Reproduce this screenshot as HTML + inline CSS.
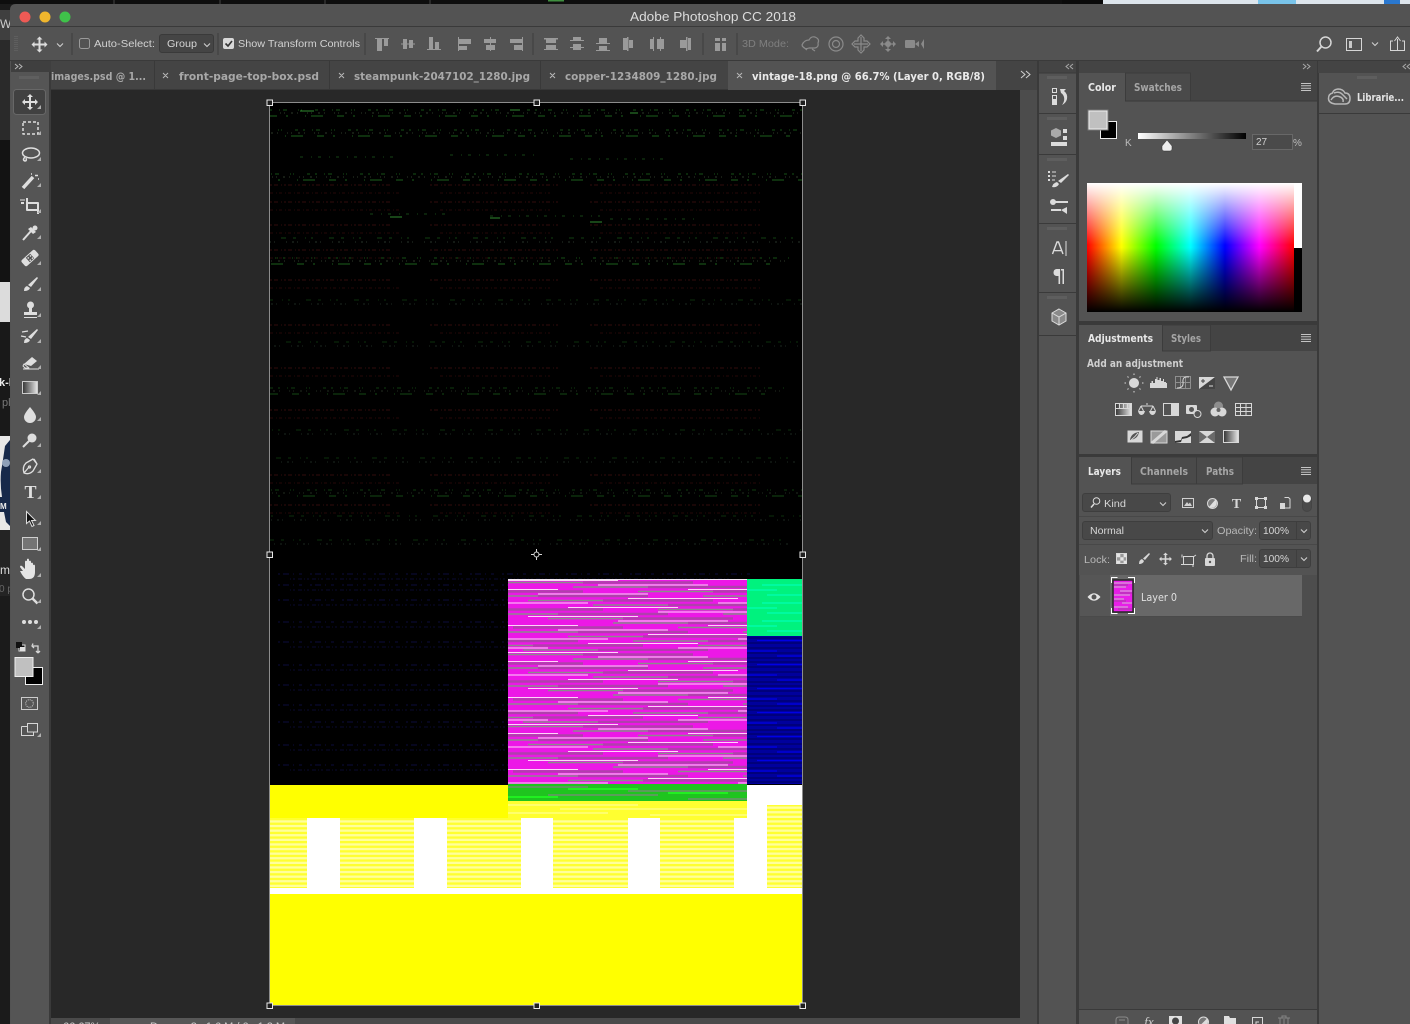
<!DOCTYPE html>
<html><head><meta charset="utf-8"><title>Adobe Photoshop CC 2018</title>
<style>
html,body{margin:0;padding:0;width:1410px;height:1024px;overflow:hidden;background:#1a1a1a}
svg{display:block}
text{font-family:"DejaVu Sans","Liberation Sans",sans-serif}
.h{font-family:"Liberation Sans",sans-serif}
</style></head><body>
<svg xmlns="http://www.w3.org/2000/svg" width="1410" height="1024" viewBox="0 0 1410 1024">
<defs>
<clipPath id="cv"><rect x="270" y="103" width="532" height="682"/></clipPath>
<linearGradient id="hue" x1="0" x2="1" y1="0" y2="0">
<stop offset="0" stop-color="#f00"/><stop offset=".1667" stop-color="#ff0"/><stop offset=".3333" stop-color="#0f0"/><stop offset=".5" stop-color="#0ff"/><stop offset=".6667" stop-color="#00f"/><stop offset=".8333" stop-color="#f0f"/><stop offset="1" stop-color="#f00"/>
</linearGradient>
<linearGradient id="wb" x1="0" x2="0" y1="0" y2="1">
<stop offset="0" stop-color="#fff"/><stop offset=".48" stop-color="#fff" stop-opacity="0"/><stop offset=".5" stop-color="#000" stop-opacity="0"/><stop offset="1" stop-color="#000"/>
</linearGradient>
<linearGradient id="k" x1="0" x2="1" y1="0" y2="0"><stop offset="0" stop-color="#fff"/><stop offset="1" stop-color="#000"/></linearGradient>
<linearGradient id="kr" x1="0" x2="1" y1="0" y2="0"><stop offset="0" stop-color="#333"/><stop offset="1" stop-color="#e8e8e8"/></linearGradient>
<pattern id="mag" patternUnits="userSpaceOnUse" x="508" y="579" width="240" height="72">
<rect width="240" height="72" fill="#ec18e6"/>
<path d="M75 3.500h110M140 8h100M205 12.500h35M0 12.500h75M30 17h110M95 21.500h110M160 26h80M225 30.500h15M0 30.500h95M50 35h110M115 39.500h110M180 44h60M5 48.500h110M70 53h110M135 57.500h105M200 62h40M0 62h70M25 66.500h110M90 71h110" stroke="#b040ac" stroke-width="2.400" fill="none"/>
<path d="M0 1.500h110M90 6h110M180 10.500h60M0 10.500h50M30 15h110M120 19.500h110M210 24h30M0 24h80M60 28.500h110M150 33h90M20 37.500h110M110 42h110M200 46.500h40M0 46.500h70M50 51h110M140 55.500h100M230 60h10M0 60h100M80 64.500h110M170 69h70M0 69h40" stroke="#ffd4fa" stroke-width="1" fill="none"/>
<path d="M0 3.500h75M65 8h75M130 12.500h75M195 17h45M0 17h30M20 21.500h75M85 26h75M150 30.500h75M215 35h25M0 35h50M40 39.500h75M105 44h75M170 48.500h70M235 53h5M0 53h70M60 57.500h75M125 62h75M190 66.500h50M0 66.500h25M15 71h75" stroke="#8b8b8b" stroke-width="1.500" fill="none"/>
</pattern>
<pattern id="grn" patternUnits="userSpaceOnUse" x="508" y="785" width="240" height="16">
<rect width="240" height="16" fill="#1fc41f"/>
<path d="M0 2h80M120 6h120M40 10h110M180 14h60" stroke="#6f8f6f" stroke-width="1.600"/>
<path d="M60 4h70M160 8h60M0 12h50" stroke="#20ff20" stroke-width="1.400"/>
</pattern>
<pattern id="ylw" patternUnits="userSpaceOnUse" x="0" y="818" width="10" height="4.600">
<rect width="10" height="4.600" fill="#ffff9c"/><rect width="10" height="2.300" fill="#ffff30"/>
</pattern>
<pattern id="aqua" patternUnits="userSpaceOnUse" x="747" y="579" width="55" height="18">
<rect width="55" height="18" fill="#00f27e"/><path d="M15 6h40M0 11h30M20 16h35" stroke="#00ffb4" stroke-width="1.200"/>
</pattern>
<pattern id="blu" patternUnits="userSpaceOnUse" x="747" y="636" width="55" height="24">
<rect width="55" height="24" fill="#00009c"/>
<path d="M0 2h55M0 7h55M0 12h55M0 17h55M0 22h55" stroke="#000068" stroke-width="1.300"/>
<path d="M10 4.500h45M0 15h30M30 20h25" stroke="#0000e6" stroke-width="1.300"/>
</pattern>
<g id="bg">
<path d="M0 0h560" stroke="#165016" stroke-width="1" stroke-dasharray="2 7 1 3 4 11 1 2 1 13 3 5"/>
<path d="M10 3h550" stroke="#2e3a2a" stroke-width="1" stroke-dasharray="1 3 1 6 2 4 1 9"/>
<path d="M0 6h540" stroke="#134013" stroke-width="1.500" stroke-dasharray="7 9 2 17 1 5 12 14"/>
</g>
<g id="bg2">
<path d="M5 0h550" stroke="#123f12" stroke-width="1" stroke-dasharray="3 9 1 5 2 16 5 7"/>
<path d="M0 4h560" stroke="#27352a" stroke-width="1" stroke-dasharray="1 5 2 3 1 11"/>
</g>
<g id="rd">
<path d="M0 0h120M160 0h130M320 0h170" stroke="#3f1010" stroke-width="1" stroke-dasharray="2 2 4 3 1 2"/>
<path d="M0 8h130M170 8h110M330 8h160" stroke="#300c0c" stroke-width="1" stroke-dasharray="3 3 1 2"/>
</g>
<g id="bl">
<path d="M8 0h480" stroke="#0c0c3c" stroke-width="1" stroke-dasharray="2 3 6 4 1 5 3 8"/>
<path d="M20 5h440" stroke="#0a0a30" stroke-width="1" stroke-dasharray="1 2 2 3 4 2"/>
</g>
<path id="menu" d="M-5-3.500h10M-5-1.200h10M-5 1.200h10M-5 3.500h10" stroke="#c4c4c4" stroke-width="1" fill="none"/>
<path id="tri" d="M0 0l-4 4h4z" fill="#b0b0b0"/>
<path id="grip" d="M0 1v3M2 1v3M4 1v3M6 1v3M8 1v3M10 1v3M12 1v3M14 1v3M16 1v3M18 1v3" stroke="#696969" stroke-width="1"/>
<path id="chev" d="M-3-1.500l3 3 3-3" stroke="#cfcfcf" stroke-width="1.100" fill="none"/>
</defs>

<!-- desktop behind -->
<rect width="1410" height="1024" fill="#1b1b1b"/>
<rect width="1103" height="4" fill="#0e0e0e"/>
<rect x="1103" width="307" height="4" fill="#dde5ec"/>
<rect x="1258" width="38" height="4" fill="#79c4ea"/>
<rect x="1384" width="16" height="4" fill="#2a78d0"/>
<rect x="1062" width="41" height="4" fill="#0a0a0a"/>
<path d="M114 0v4M220 0v4M325 0v4M430 0v4" stroke="#444"/>
<rect x="548" width="16" height="1.500" fill="#3f8f3f"/>
<rect x="0" y="10" width="10" height="30" fill="#3f3f3f"/>
<rect x="0" y="40" width="10" height="100" fill="#2a2a2a"/>
<rect x="0" y="140" width="10" height="142" fill="#131313"/>
<rect x="0" y="282" width="10" height="40" fill="#dcdcdc"/>
<rect x="0" y="322" width="10" height="113" fill="#191919"/>
<rect x="0" y="436" width="10" height="94" fill="#e8e8e8"/>
<path d="M10 440L5 446Q3 460 1 472Q0 484 2 497H0V512H4L6 522 10 526z" fill="#17294a"/>
<circle cx="6" cy="463" r="4" fill="#8fa0b8"/>
<rect x="0" y="530" width="10" height="66" fill="#242424"/>
<text x="0" y="28" font-size="12" fill="#ccc" class="h">W</text>
<text x="-1" y="386" font-size="11" fill="#eee" font-weight="bold" class="h">k-l</text>
<text x="2" y="406" font-size="11" fill="#777" class="h">pl</text>
<text x="0" y="574" font-size="12" fill="#ddd" class="h">m</text>
<text x="-1" y="592" font-size="10" fill="#666" class="h">0 p</text>
<text x="0" y="509" font-size="8" fill="#eee" font-weight="bold" class="h">M</text>

<!-- window -->
<path d="M10 1024V10q0-6 6-6H1410v1020z" fill="#535353"/>
<rect x="10" y="26" width="1400" height="1" fill="#3a3a3a"/>
<rect x="10" y="60" width="1400" height="1" fill="#3a3a3a"/>
<circle cx="25" cy="17" r="5.500" fill="#ee5a55"/><circle cx="45" cy="17" r="5.500" fill="#f0b62d"/><circle cx="65" cy="17" r="5.500" fill="#3fc24a"/>
<text x="630" y="21" font-size="13" fill="#dcdcdc" textLength="166" lengthAdjust="spacingAndGlyphs" class="h">Adobe Photoshop CC 2018</text>

<!-- options bar -->
<path d="M15 36v16M17 36v16" stroke="#6a6a6a" stroke-dasharray="1 1"/>
<path d="M72 33v22M218 33v22M365 33v22M533 33v22M703 33v22M737 33v22" stroke="#3c3c3c"/>
<g transform="translate(39.500 44.500)" fill="#dcdcdc"><path d="M0-8L-3-5h2v4h-4v-2l-3 3 3 3V1h4v4h-2l3 3 3-3H1V1h4v2l3-3-3-3v2H1v-4h2z"/></g>
<use href="#chev" x="60" y="45"/>
<rect x="79.500" y="38.500" width="10" height="10" rx="2" fill="none" stroke="#9a9a9a"/>
<text x="94" y="47" font-size="10.500" fill="#d2d2d2" textLength="61" lengthAdjust="spacingAndGlyphs" class="h">Auto-Select:</text>
<rect x="159.500" y="34.500" width="54" height="18" rx="2.500" fill="#454545" stroke="#3a3a3a"/>
<text x="167" y="47" font-size="10.500" fill="#d6d6d6" textLength="30" lengthAdjust="spacingAndGlyphs" class="h">Group</text>
<use href="#chev" x="207" y="45"/>
<rect x="223" y="38" width="11" height="11" rx="2" fill="#d8d8d8"/>
<path d="M225.500 43.500l2.500 2.500 4-5" stroke="#333" stroke-width="1.600" fill="none"/>
<text x="238" y="47" font-size="10.500" fill="#d2d2d2" textLength="122" lengthAdjust="spacingAndGlyphs" class="h">Show Transform Controls</text>
<g fill="#9a9a9a">
<path d="M375 38h14v1h-14zM377 39h5v12h-5zM384 39h4v7h-4z"/>
<path d="M401 43.500h14v1h-14zM403 39h4v10h-4zM409 40h4v8h-4z"/>
<path d="M427 49h14v1h-14zM429 37h4v12h-4zM435 42h4v7h-4z"/>
<path d="M458 37h1v14h-1zM459 39h12v5h-12zM459 46h8v4h-8z"/>
<path d="M490 37h1v14h-1zM484 39h12v4h-12zM486 45h9v5h-9z"/>
<path d="M522 37h1v14h-1zM510 39h12v4h-12zM514 45h8v5h-8z"/>
<path d="M544 38h14v1.500h-14zM546 39h10v4h-10zM544 49h14v1h-14zM546 45h10v4h-10z"/>
<path d="M570 40h14v1h-14zM573 37h8v3h-8zM570 47h14v1h-14zM573 44h8v6h-8z"/>
<path d="M596 43h14v1h-14zM599 38h8v5h-8zM596 50h14v1h-14zM599 46h8v4h-8z"/>
<path d="M627 37h1.500v14H627zM629 40h4v8h-4zM623 38h4v12h-4z"/>
<path d="M653 37h1v14h-1zM650 39h3v10h-3zM660 37h1v14h-1zM657 39h7v10h-7z"/>
<path d="M686 37h1.500v14H686zM680 40h6v8h-6zM688 38h3v12h-3z"/>
<path d="M715 38h5v3h-5zM715 43h5v8h-5zM722 38h4v3h-4zM722 43h4v8h-4z"/>
</g>
<text x="742" y="47" font-size="10.500" fill="#7f7f7f" textLength="47" lengthAdjust="spacingAndGlyphs" class="h">3D Mode:</text>
<g fill="none" stroke="#8a8a8a" stroke-width="1.200">
<path d="M802 45q2-5 7-5 2-4 6-3 5 2 3 6 1 4-3 5h-6q-5 2-7-3zM807 50l-5-4M812 49l3 2"/>
<circle cx="836" cy="44" r="7"/><circle cx="836" cy="44" r="3.500"/>
<path d="M861 37v14M854 44h14M858 38l3-3 3 3v3h3l3 3-3 3h-3v3l-3 3-3-3v-3h-3l-3-3 3-3h3z"/>
<path d="M888 38v12M882 44h12"/>
</g>
<g fill="#8a8a8a"><path d="M888 36l3 3h-6zM888 52l3-3h-6zM880 44l3-3v6zM896 44l-3-3v6z"/><circle cx="888" cy="44" r="3"/>
<rect x="905" y="40" width="10" height="8" rx="1"/><path d="M915 44l4-3v6zM924 39l-3 5 3 5" /></g>
<g fill="none" stroke="#d6d6d6" stroke-width="1.500">
<circle cx="1325.500" cy="42.500" r="5.500"/><path d="M1321.500 46.500l-4.500 5" stroke-width="2"/>
<rect x="1346.500" y="38.500" width="15" height="12" stroke-width="1"/>
<path d="M1397.500 39v11M1394.500 41l3-4 3 4" stroke-width="1"/>
<path d="M1393 41h-2.500v9.500h14V41H1402" stroke-width="1"/>
</g>
<path d="M1349 41h3v7h-3z" fill="#c8c8c8"/>
<use href="#chev" x="1375" y="44"/>

<!-- document column -->
<rect x="51" y="90" width="969" height="934" fill="#282828"/>
<rect x="51" y="61" width="986" height="29" fill="#444"/>
<rect x="1020" y="90" width="17" height="934" fill="#4c4c4c"/>
<rect x="1037" y="61" width="2" height="963" fill="#3a3a3a"/>
<path d="M154.500 61v29M329.500 61v29M540.500 61v29" stroke="#393939"/>
<rect x="728" y="61" width="268" height="29" fill="#535353"/>
<rect x="51" y="89" width="677" height="1" fill="#383838"/>
<g font-size="11" font-weight="bold" fill="#a8a8a8">
<text x="51" y="80" textLength="95" lengthAdjust="spacingAndGlyphs">images.psd @ 1...</text>
<text x="179" y="80" textLength="140" lengthAdjust="spacingAndGlyphs">front-page-top-box.psd</text>
<text x="354" y="80" textLength="176" lengthAdjust="spacingAndGlyphs">steampunk-2047102_1280.jpg</text>
<text x="565" y="80" textLength="152" lengthAdjust="spacingAndGlyphs">copper-1234809_1280.jpg</text>
<text x="752" y="80" textLength="233" lengthAdjust="spacingAndGlyphs" fill="#eaeaea">vintage-18.png @ 66.7% (Layer 0, RGB/8)</text>
</g>
<path d="M163 73l5 5M168 73l-5 5M339 73l5 5M344 73l-5 5M550 73l5 5M555 73l-5 5M737 73l5 5M742 73l-5 5" stroke="#b8b8b8" stroke-width="1" fill="none"/>
<path d="M1021 71l4 3.500-4 3.500M1026 71l4 3.500-4 3.500" stroke="#d0d0d0" fill="none"/>

<!-- canvas image -->
<rect x="270" y="103" width="532" height="902" fill="#000"/>
<g clip-path="url(#cv)">
<use href="#bg" x="270" y="110"/><use href="#bg" x="250" y="130"/><use href="#bg" x="262" y="174"/>
<use href="#bg2" x="240" y="238"/><use href="#bg" x="230" y="258"/>
<g opacity=".75">
<use href="#bg2" x="265" y="300"/><use href="#bg2" x="245" y="342"/><use href="#bg" x="225" y="388"/><use href="#bg2" x="255" y="430"/><use href="#bg2" x="235" y="458"/><use href="#bg" x="262" y="490"/><use href="#bg2" x="248" y="516"/><use href="#bg2" x="228" y="540"/>
</g>
<g transform="translate(270 0)" opacity=".8">
<use href="#rd" y="185"/><use href="#rd" y="202"/><use href="#rd" y="225"/><use href="#rd" y="250"/><use href="#rd" y="280"/><use href="#rd" y="325"/><use href="#rd" y="368"/><use href="#rd" y="410"/><use href="#rd" y="475"/><use href="#rd" y="505"/>
</g>
<g transform="translate(270 0)">
<path d="M30 157h100M180 155h90M300 159h100M100 214h80M220 216h110M340 219h90" stroke="#164416" stroke-dasharray="3 8 1 6"/>
<path d="M30 111h14M240 110h10M360 113h8M120 217h12M220 218h10M320 222h12" stroke="#2f8a2f"/>
<use href="#bl" y="574"/><use href="#bl" y="585"/><use href="#bl" y="600"/><use href="#bl" y="622"/><use href="#bl" y="642"/><use href="#bl" y="665"/><use href="#bl" y="685"/><use href="#bl" y="705"/><use href="#bl" y="722"/><use href="#bl" y="745"/><use href="#bl" y="765"/>
</g>
</g>
<rect x="508" y="579" width="239" height="205" fill="url(#mag)"/>
<rect x="508" y="579" width="239" height="1" fill="#f0e8f0"/>
<rect x="747" y="579" width="55" height="57" fill="url(#aqua)"/>
<rect x="747" y="636" width="55" height="148" fill="url(#blu)"/>
<rect x="270" y="785" width="238" height="33" fill="#ff0"/>
<rect x="508" y="784" width="239" height="17" fill="url(#grn)"/>
<rect x="508" y="801" width="239" height="17" fill="#ffff30"/>
<path d="M508 805h130M560 809h187M508 813h100M650 815h97" stroke="#ffff90" stroke-width="1.200"/>
<rect x="747" y="785" width="55" height="20" fill="#fff"/>
<rect x="270" y="818" width="532" height="76" fill="#fff"/>
<rect x="747" y="805" width="55" height="13" fill="#fff"/>
<g fill="url(#ylw)">
<rect x="270" y="818" width="37" height="70"/><rect x="340" y="818" width="74" height="70"/><rect x="447" y="818" width="74" height="70"/><rect x="553" y="818" width="75" height="70"/><rect x="660" y="818" width="74" height="70"/><rect x="767" y="805" width="35" height="83"/>
</g>
<rect x="270" y="894" width="532" height="111" fill="#ff0"/>
<!-- transform controls -->
<rect x="269.500" y="102.500" width="533" height="903" fill="none" stroke="#8c8c8c"/>
<g fill="#1f1f1f" stroke="#e8e8e8">
<rect x="267" y="100" width="5.500" height="5.500"/><rect x="534" y="100" width="5.500" height="5.500"/><rect x="800" y="100" width="5.500" height="5.500"/>
<rect x="267" y="552" width="5.500" height="5.500"/><rect x="800" y="552" width="5.500" height="5.500"/>
<rect x="267" y="1003" width="5.500" height="5.500"/><rect x="534" y="1003" width="5.500" height="5.500"/><rect x="800" y="1003" width="5.500" height="5.500"/>
</g>
<g stroke="#d8d8d8" fill="none"><circle cx="536.500" cy="554.500" r="2.500"/><path d="M536.500 549v3M536.500 557v3M531 554.500h3M539 554.500h3"/></g>

<!-- status bar -->
<rect x="51" y="1018" width="969" height="6" fill="#4a4a4a"/>
<rect x="110" y="1018" width="185" height="6" fill="#575757"/>
<text x="63" y="1030" font-size="11" fill="#cfcfcf" class="h">66.67%</text>
<text x="150" y="1030" font-size="11" fill="#cfcfcf" class="h" textLength="135" lengthAdjust="spacing">Doc: 3.16M/6.12M</text>

<!-- toolbar -->
<rect x="11" y="61" width="38" height="963" fill="#555"/>
<rect x="49" y="61" width="2" height="963" fill="#3a3a3a"/>
<rect x="11" y="61" width="40" height="11" fill="#3f3f3f"/>
<path d="M15 64l3 2.500-3 2.500M19 64l3 2.500-3 2.500" stroke="#b8b8b8" fill="none"/>
<use href="#grip" x="20" y="75"/>
<rect x="13.500" y="89.500" width="32" height="25" rx="3" fill="#414141" stroke="#676767"/>
<g fill="#dedede" stroke="#dedede" stroke-width="1.500" stroke-linejoin="round">
<g transform="translate(30 102)" stroke="none"><path d="M0-8L-3-5h2v4h-4v-2l-3 3 3 3V1h4v4h-2l3 3 3-3H1V1h4v2l3-3-3-3v2H1v-4h2z"/></g>
<rect x="23" y="122" width="15" height="12" fill="none" stroke-dasharray="3 2"/>
<g fill="none"><ellipse cx="31" cy="153" rx="8.500" ry="5"/><path d="M25 157q-3 3 0 4 2 0 1-3"/></g>
<path d="M23 188l10-11" stroke-width="3.500" fill="none"/>
<path d="M35 175.500l3 0M38 172v0M31 174l1 0M38 179l1 0" stroke-width="1.500"/>
<path d="M27 198V210H38M21 203h3M27 203H38V214" fill="none" stroke-width="2"/><path d="M20 200h5" stroke-width="1" fill="none"/>
<path d="M23 240l8-9" stroke-width="2" fill="none"/><path d="M31 227l5 5-3 2-5-5z" stroke="none"/><circle cx="35" cy="228" r="2.500" stroke="none"/>
<g transform="rotate(-42 30 258)"><rect x="21" y="254" width="18" height="8" rx="2" stroke="none"/><path d="M27 255h6v6h-6z" fill="#555" stroke="none"/><path d="M28 256h1.500v1.500H28zM31 256h1.500v1.500H31zM28 259h1.500v1.500H28zM31 259h1.500v1.500H31z" fill="#ddd" stroke="none"/></g>
<path d="M37 277l1 1-7 9-3-2z" stroke="none"/><path d="M27 286q-3 1-3 5 5 0 6-3z" stroke="none"/>
<circle cx="30.500" cy="305" r="3.500" stroke="none"/><path d="M29 308h3v4h5v3H24v-3h5z" stroke="none"/><rect x="24" y="317" width="13" height="1" stroke="none"/>
<path d="M37 329l1 1-7 9-3-2z" stroke="none"/><path d="M27 338q-3 1-3 5 5 0 6-3z" stroke="none"/><path d="M22 332l6-1M21 336l5 1" fill="none" stroke-width="1.200"/>
<path d="M24 364l8-7 5 4-6 5z" stroke="none"/><path d="M24 364l5 4h-4l-2-2zM23 369h16" fill="none" stroke-width="1"/>
<rect x="22.500" y="381.500" width="15" height="12" fill="url(#kr)" stroke-width="1" stroke="#ccc"/>
<path d="M30 407q6 7 6 10a6 6 0 0 1-12 0q0-3 6-10z" stroke="none"/>
<circle cx="32" cy="438" r="4.500" stroke="none"/><path d="M29 441l-6 6" stroke-width="2" fill="none"/>
<g fill="none" stroke-width="1.300"><path d="M24 473q-2-6 2-10l7-4 4 5-4 7q-4 4-9 2zM24 473l5-6M34 459l3 5"/><circle cx="29.500" cy="467" r="1"/></g>
</g>
<text x="30.500" y="498" text-anchor="middle" font-size="18" font-weight="bold" fill="#e0e0e0" style="font-family:'Liberation Serif',serif">T</text>
<path d="M26.500 511.500v12l3-2.500 2.500 5.500 2-1-2.500-5h4z" fill="#111" stroke="#ddd"/>
<rect x="22.500" y="537.500" width="15" height="12" fill="#747474" stroke="#cfcfcf"/>
<path d="M23 571l-3-4q0-2 2-1l3 3v-7q0-2 2-1l0-2q2-1 2 1v1q2-1 2 1v1q2-1 2 1v1q2-1 2 1v6q0 7-6 7h-3q-3-2-6-8z" fill="#e4e4e4"/>
<g fill="none" stroke="#dedede"><circle cx="28.500" cy="594.500" r="5.500" stroke-width="1.500"/><path d="M32.500 598.500l5 5" stroke-width="2.500"/></g>
<g fill="#dedede"><circle cx="24" cy="622" r="2"/><circle cx="30" cy="622" r="2"/><circle cx="36" cy="622" r="2"/></g>
<g fill="#b0b0b0"><use href="#tri" x="41" y="105"/><use href="#tri" x="41" y="131"/><use href="#tri" x="41" y="157"/><use href="#tri" x="41" y="183"/><use href="#tri" x="41" y="209"/><use href="#tri" x="41" y="235"/><use href="#tri" x="41" y="261"/><use href="#tri" x="41" y="287"/><use href="#tri" x="41" y="313"/><use href="#tri" x="41" y="339"/><use href="#tri" x="41" y="365"/><use href="#tri" x="41" y="391"/><use href="#tri" x="41" y="417"/><use href="#tri" x="41" y="443"/><use href="#tri" x="41" y="469"/><use href="#tri" x="41" y="495"/><use href="#tri" x="41" y="521"/><use href="#tri" x="41" y="547"/><use href="#tri" x="41" y="573"/><use href="#tri" x="41" y="599"/><use href="#tri" x="41" y="625"/><use href="#tri" x="41" y="733"/></g>
<rect x="19" y="645" width="6" height="6" fill="#111" stroke="#ddd"/><rect x="16" y="642" width="6" height="6" fill="#111"/><rect x="20" y="647" width="5" height="4" fill="#e0e0e0"/>
<path d="M33 646h5v6M33 643.500l-1 2.500 2 2M38 653l-2-2M38 653l2-2" stroke="#d6d6d6" stroke-width="1.300" fill="none"/>
<rect x="25.500" y="667.500" width="17" height="17" fill="#000" stroke="#eee"/>
<rect x="15" y="657.500" width="18" height="19" fill="#c0c0c0" stroke="#eee"/>
<rect x="21.500" y="697.500" width="16" height="12" fill="none" stroke="#ccc"/><circle cx="29.500" cy="703.500" r="3.800" fill="none" stroke="#ccc" stroke-dasharray="1 1"/>
<path d="M21.500 726.500h6M21.500 726.500v9h12v-3M27.500 723.500h10v8.500h-10z" fill="none" stroke="#d6d6d6"/>

<!-- top strip right panels -->
<rect x="1039" y="61" width="371" height="12" fill="#444"/>
<path d="M1069 64l-3 2.500 3 2.500M1073 64l-3 2.500 3 2.500M1303 64l3 2.500-3 2.500M1307 64l3 2.500-3 2.500M1406 64l-3 2.500 3 2.500M1410 64l-3 2.500 3 2.500" stroke="#a8a8a8" fill="none"/>
<!-- dock -->
<rect x="1039" y="73" width="37" height="951" fill="#535353"/>
<path d="M1039 73h37M1039 113.500h37M1039 154.500h37M1039 223.500h37M1039 292.500h37M1039 335.500h37M1076.500 61v963" stroke="#3a3a3a"/>
<rect x="1077" y="61" width="2" height="963" fill="#3a3a3a"/>
<use href="#grip" x="1048" y="75"/><use href="#grip" x="1048" y="116"/><use href="#grip" x="1048" y="157"/><use href="#grip" x="1048" y="226"/><use href="#grip" x="1048" y="295"/>
<g fill="#dcdcdc">
<rect x="1052.500" y="88.500" width="4" height="4" fill="none" stroke="#dcdcdc"/><rect x="1052.500" y="95.500" width="4" height="4" fill="none" stroke="#dcdcdc"/><rect x="1052" y="100" width="5" height="5"/>
<path d="M1060 89h6l-2 2q4 3 3 8-1 4-5 6 3-4 2-8-1-3-3-4z"/>
<path d="M1056 128l5 2.500v5l-5 2.500-5-2.500v-5z" fill="#aaa"/><rect x="1063" y="129" width="4" height="4"/><rect x="1063" y="136" width="4" height="4"/><rect x="1051" y="142" width="16" height="4"/>
<path d="M1048 171h2v2h-2zM1048 175h2v2h-2zM1048 179h2v2h-2zM1052 171.500h4v1h-4zM1052 175.500h4v1h-4zM1052 179.500h3v1h-3z"/>
<path d="M1068 174l1 1-8 8-3-2z"/><path d="M1057 182q-4 1-5 5 5 1 7-3z"/>
<circle cx="1053" cy="202" r="3"/><path d="M1053 201h15v2h-15zM1051 209h10v2h-10z"/><path d="M1061 210l6-3v7z"/>
<rect x="1065.500" y="241" width="1" height="15"/><path d="M1052.500 254l4.500-12h1.500l4.500 12" fill="none" stroke="#dcdcdc" stroke-width="1.400"/><path d="M1054.500 250h7v1.300h-7z"/>
<path d="M1061 269h3v15h-1.500v-13.500h-1.500z"/><rect x="1058.500" y="269" width="1.600" height="15"/><path d="M1058.500 269h-2q-3 .5-3 3.500t3 3.500h2z"/>
<path d="M1059 309l7 4v8l-7 4-7-4v-8z" fill="#8a8a8a" stroke="#dcdcdc"/><path d="M1052 313l7 4 7-4M1059 317v8" fill="none" stroke="#dcdcdc"/>
</g>

<!-- right panels -->
<rect x="1079" y="73" width="238" height="951" fill="#3a3a3a"/>
<rect x="1079" y="73" width="238" height="248" fill="#535353"/>
<rect x="1079" y="73" width="238" height="28" fill="#444"/>
<rect x="1079" y="73" width="46" height="29" fill="#535353"/>
<rect x="1125.500" y="73" width="65" height="28" fill="#4a4a4a" stroke="#3c3c3c"/>
<rect x="1079" y="100.500" width="238" height="1" fill="#3a3a3a"/><rect x="1079" y="100.500" width="46" height="1" fill="#535353"/>
<text x="1088" y="91" font-size="10.500" font-weight="bold" fill="#e8e8e8" textLength="28" lengthAdjust="spacingAndGlyphs">Color</text>
<text x="1134" y="91" font-size="10.500" font-weight="bold" fill="#a6a6a6" textLength="48" lengthAdjust="spacingAndGlyphs">Swatches</text>
<use href="#menu" x="1306" y="87"/>
<rect x="1100.500" y="121.500" width="16" height="17" fill="#000" stroke="#eee"/>
<rect x="1087.500" y="109.500" width="21" height="21" fill="#777"/>
<rect x="1089" y="111" width="18" height="18" fill="#c0c0c0" stroke="#eee"/>
<text x="1125" y="146" font-size="10" fill="#bdbdbd" class="h">K</text>
<rect x="1138" y="133" width="108" height="6" fill="url(#k)"/>
<path d="M1167 140l5 6v3q0 2-2 2h-6q-2 0-2-2v-3z" fill="#eee" stroke="#333" stroke-width=".5"/>
<rect x="1252.500" y="134.500" width="40" height="15" fill="#4a4a4a" stroke="#686868"/>
<text x="1256" y="145" font-size="10" fill="#d0d0d0" class="h">27</text>
<text x="1293" y="146" font-size="10" fill="#bdbdbd" class="h">%</text>
<rect x="1087" y="183" width="207" height="129" fill="url(#hue)"/>
<rect x="1087" y="183" width="207" height="129" fill="url(#wb)"/>
<rect x="1294" y="183" width="8" height="65" fill="#fff"/>
<rect x="1294" y="248" width="8" height="64" fill="#000"/>

<!-- adjustments -->
<rect x="1079" y="325" width="238" height="129" fill="#535353"/>
<rect x="1079" y="325" width="238" height="26" fill="#444"/>
<rect x="1079" y="325" width="83" height="27" fill="#535353"/>
<rect x="1162.500" y="325" width="48" height="26" fill="#4a4a4a" stroke="#3c3c3c"/>
<text x="1088" y="342" font-size="10.500" font-weight="bold" fill="#e8e8e8" textLength="65" lengthAdjust="spacingAndGlyphs">Adjustments</text>
<text x="1171" y="342" font-size="10.500" font-weight="bold" fill="#a6a6a6" textLength="30" lengthAdjust="spacingAndGlyphs">Styles</text>
<use href="#menu" x="1306" y="338"/>
<text x="1087" y="367" font-size="10.500" font-weight="bold" fill="#cfcfcf" textLength="96" lengthAdjust="spacingAndGlyphs">Add an adjustment</text>
<g stroke="#d8d8d8" fill="none">
<circle cx="1134" cy="383" r="4.500" fill="#d8d8d8"/><path d="M1134 375v-1.500M1134 392.500V391M1126 383h-1.500M1143.500 383H1142M1128.500 377.500l-1-1M1140.500 389.500l-1-1M1128.500 388.500l-1 1M1140.500 376.500l-1 1"/>
<path d="M1150 388v-5h1.500v-2h1.500v2h2v-4h1.500v-2h1v3h2v-2h1.500v3h2v-2h1v3h2v1h1v5z" fill="#d8d8d8" stroke="none"/>
<path d="M1175.500 376.500h15v12h-15zM1180.500 376.500v12M1185.500 376.500v12M1175.500 382.500h15" stroke="#8f8f8f"/><path d="M1177 388q7 0 6-6t6-5" stroke="#d8d8d8"/>
<rect x="1199" y="377" width="16" height="12" fill="#d8d8d8" stroke="none"/><path d="M1199 389l16-12v12z" fill="#444" stroke="none"/><path d="M1201 381h4M1203 379v4" stroke="#444"/><path d="M1209 386h4" stroke="#ddd"/>
<path d="M1224 377h14l-7 13z" fill="#777" stroke-width="1.300"/>
<rect x="1115.500" y="403.500" width="16" height="12" fill="url(#kr)"/><path d="M1115.500 408.500h16M1119.500 403.500v5M1123.500 403.500v5M1127.500 403.500v5" stroke="#d8d8d8"/>
<path d="M1147 403v2M1141 406h12M1141 406l-2.500 5M1141 406l2.500 5M1153 406l-2.500 5M1153 406l2.500 5"/><path d="M1138 411h7q-1 4-3.500 4t-3.500-4zM1149 411h7q-1 4-3.500 4t-3.500-4z" fill="#d8d8d8" stroke="none"/>
<rect x="1163.500" y="403.500" width="15" height="12"/><rect x="1171" y="404" width="7.500" height="11" fill="#d8d8d8" stroke="none"/>
<rect x="1186" y="405" width="11" height="9" rx="1" fill="#d8d8d8" stroke="none"/><circle cx="1191.500" cy="409.500" r="2.500" fill="#555" stroke="none"/><circle cx="1197.500" cy="414" r="3.500" fill="#555"/>
<circle cx="1218.500" cy="406" r="4.500" fill="#8d8d8d" stroke="none"/><circle cx="1215" cy="412" r="4.500" fill="#d8d8d8" stroke="none"/><circle cx="1222" cy="412" r="4.500" fill="#d8d8d8" stroke="none"/><circle cx="1218.500" cy="410" r="2" fill="#666" stroke="none"/>
<path d="M1235.500 403.500h16v12h-16zM1240.500 403.500v12M1246 403.500v12M1235.500 407.500h16M1235.500 411.500h16"/>
<rect x="1127.500" y="430.500" width="15" height="12" fill="#d8d8d8" stroke="none"/><path d="M1130 440q1-7 9-8-1 7-9 8z" fill="#555" stroke="none"/><path d="M1131 440q4-3 7-7" stroke="#d8d8d8"/>
<rect x="1151" y="431" width="16" height="12" fill="#9a9a9a" stroke="#d8d8d8"/><path d="M1152 443l14-12" stroke="#d8d8d8" stroke-width="3"/>
<rect x="1175" y="431" width="16" height="12" fill="#d8d8d8" stroke="none"/><path d="M1175 441l6-1 1-3 5-1 4-3v3l-4 2-5 1-1 3-6 1z" fill="#333" stroke="none"/>
<rect x="1199" y="431" width="16" height="12" fill="#d8d8d8" stroke="none"/><path d="M1199 431l8 6-8 6zM1215 431l-8 6 8 6z" fill="#6a6a6a" stroke="none"/>
<rect x="1223.500" y="430.500" width="15" height="12" fill="url(#kr)" stroke="#d8d8d8"/>
</g>

<!-- layers -->
<rect x="1079" y="457" width="238" height="567" fill="#4d4d4d"/>
<rect x="1079" y="457" width="238" height="118" fill="#535353"/>
<rect x="1079" y="457" width="238" height="27" fill="#444"/>
<rect x="1079" y="457" width="52" height="28" fill="#535353"/>
<rect x="1131.500" y="457" width="65" height="27" fill="#4a4a4a" stroke="#3c3c3c"/>
<rect x="1196.500" y="457" width="46" height="27" fill="#4a4a4a" stroke="#3c3c3c"/>
<text x="1088" y="475" font-size="10.500" font-weight="bold" fill="#e8e8e8" textLength="33" lengthAdjust="spacingAndGlyphs">Layers</text>
<text x="1140" y="475" font-size="10.500" font-weight="bold" fill="#a6a6a6" textLength="48" lengthAdjust="spacingAndGlyphs">Channels</text>
<text x="1206" y="475" font-size="10.500" font-weight="bold" fill="#a6a6a6" textLength="28" lengthAdjust="spacingAndGlyphs">Paths</text>
<use href="#menu" x="1306" y="471"/>
<path d="M1079 516.500h238M1079 544.500h238" stroke="#484848"/>
<rect x="1082.500" y="493.500" width="88" height="18" rx="2.500" fill="#484848" stroke="#3e3e3e"/>
<circle cx="1096.500" cy="501" r="3.300" fill="none" stroke="#ddd"/><path d="M1094 504l-3 3.500" stroke="#ddd" stroke-width="1.500"/>
<text x="1104" y="507" font-size="10.500" fill="#d6d6d6" class="h" textLength="22" lengthAdjust="spacingAndGlyphs">Kind</text>
<use href="#chev" x="1163" y="504"/>
<rect x="1182.500" y="498.500" width="11" height="9" fill="none" stroke="#d0d0d0"/><path d="M1184 506l3-4 1.500 2 1.500-1.500 2 3.500z" fill="#d0d0d0"/>
<circle cx="1212.500" cy="503.500" r="5" fill="#808080" stroke="#d8d8d8"/><path d="M1215.500 499.500a5 5 0 0 1-6.500 7.500z" fill="#e0e0e0"/>
<text x="1236.500" y="508" text-anchor="middle" font-size="14" font-weight="bold" fill="#d8d8d8" style="font-family:'Liberation Serif',serif">T</text>
<rect x="1256.500" y="498.500" width="9" height="9" fill="none" stroke="#d8d8d8"/><g fill="#d8d8d8"><rect x="1255" y="497" width="3" height="3"/><rect x="1264" y="497" width="3" height="3"/><rect x="1255" y="506" width="3" height="3"/><rect x="1264" y="506" width="3" height="3"/></g>
<path d="M1284.500 497.500h4l1.500 1.500v9h-7v-3" fill="none" stroke="#d8d8d8"/><rect x="1280" y="503" width="5" height="6" fill="#d8d8d8"/>
<rect x="1302.500" y="494.500" width="9" height="17" rx="4.500" fill="#4a4a4a" stroke="#444"/><circle cx="1307" cy="498.500" r="4" fill="#e8e8e8"/>
<rect x="1082.500" y="521.500" width="130" height="18" rx="2.500" fill="#484848" stroke="#3e3e3e"/>
<text x="1090" y="534" font-size="10.500" fill="#d6d6d6" class="h" textLength="34" lengthAdjust="spacingAndGlyphs">Normal</text>
<use href="#chev" x="1205" y="531"/>
<text x="1217" y="534" font-size="10.500" fill="#b8b8b8" class="h" textLength="40" lengthAdjust="spacingAndGlyphs">Opacity:</text>
<rect x="1259.500" y="521.500" width="51" height="18" rx="2.500" fill="#484848" stroke="#3e3e3e"/><path d="M1296.500 522v17" stroke="#3e3e3e"/>
<text x="1263" y="534" font-size="10.500" fill="#d6d6d6" class="h" textLength="26" lengthAdjust="spacingAndGlyphs">100%</text>
<use href="#chev" x="1304" y="531"/>
<text x="1084" y="563" font-size="10.500" fill="#b8b8b8" class="h" textLength="26" lengthAdjust="spacingAndGlyphs">Lock:</text>
<rect x="1116.500" y="553.500" width="10" height="10" fill="#999" stroke="#d8d8d8"/><path d="M1117 554h3.300v3.300H1117zM1120.300 557.300h3.300v3.300h-3.300zM1123.600 554h3v3.300h-3zM1117 560.600h3.300v3h-3.300zM1123.600 560.600h3v3h-3z" fill="#e4e4e4"/>
<path d="M1149 553l1 1-5 6-2-1.500z" fill="#d8d8d8"/><path d="M1142 559q-3 1-3 5 4 0 5-3z" fill="#d8d8d8"/>
<g transform="translate(1165.500 559) scale(.8)" fill="#d8d8d8"><path d="M0-8L-3-5h2v4h-4v-2l-3 3 3 3V1h4v4h-2l3 3 3-3H1V1h4v2l3-3-3-3v2H1v-4h2z"/></g>
<path d="M1183.500 556.500h10v8h-10zM1182 554.500v3M1196 555l-3 2M1181 564.500h3M1193 564.500v2.500" fill="none" stroke="#d8d8d8"/>
<rect x="1205" y="558" width="10" height="8" rx="1" fill="#d8d8d8"/><path d="M1207 558v-2a3 3 0 0 1 6 0v2" fill="none" stroke="#d8d8d8" stroke-width="1.300"/><circle cx="1210" cy="562" r="1.200" fill="#555"/>
<text x="1240" y="562" font-size="10.500" fill="#b8b8b8" class="h" textLength="17" lengthAdjust="spacingAndGlyphs">Fill:</text>
<rect x="1259.500" y="549.500" width="51" height="18" rx="2.500" fill="#484848" stroke="#3e3e3e"/><path d="M1296.500 550v17" stroke="#3e3e3e"/>
<text x="1263" y="562" font-size="10.500" fill="#d6d6d6" class="h" textLength="26" lengthAdjust="spacingAndGlyphs">100%</text>
<use href="#chev" x="1304" y="559"/>
<rect x="1080" y="575" width="222" height="41" fill="#565656"/>
<rect x="1110" y="575" width="192" height="41" fill="#686868"/>
<rect x="1080" y="616" width="222" height="1" fill="#4a4a4a"/>
<path d="M1087.500 597q6.500-7.500 13 0q-6.500 7.500-13 0z" fill="#e4e4e4"/><circle cx="1094" cy="597" r="2.500" fill="#555"/>
<rect x="1113" y="580" width="20" height="32" fill="#e81ee8" stroke="#262626" stroke-width="1.500"/>
<path d="M1114 583h18M1114 587h12M1120 591h12M1114 595h16M1114 599h10M1122 603h10M1114 607h14" stroke="#cfc0cf"/>
<path d="M1114 585h14M1120 593h12M1114 601h12M1118 609h14" stroke="#a040a0"/>
<path d="M1111.500 583v-5.500h6M1128 577.500h6.500v5.500M1111.500 608v5.500h6M1128 613.500h6.500V608" fill="none" stroke="#fff" stroke-width="1"/>
<text x="1141" y="601" font-size="10.500" fill="#e0e0e0" textLength="36" lengthAdjust="spacingAndGlyphs">Layer 0</text>
<!-- layers footer -->
<rect x="1079" y="1009" width="238" height="1" fill="#3a3a3a"/>
<rect x="1079" y="1010" width="238" height="14" fill="#535353"/>
<g fill="none" stroke="#8a8a8a"><path d="M1116 1024v-4q0-3 3-3h6q3 0 3 3v4M1119 1020h6"/></g>
<text x="1149" y="1026" text-anchor="middle" font-size="13" font-style="italic" fill="#cfcfcf" style="font-family:'Liberation Serif',serif">fx</text>
<rect x="1169" y="1016" width="13" height="8" fill="#e0e0e0"/><circle cx="1175.500" cy="1021" r="3.500" fill="#444"/>
<circle cx="1203.500" cy="1022" r="5" fill="#777" stroke="#ddd"/><path d="M1207 1018.500a5 5 0 0 1-7 7z" fill="#ddd"/>
<path d="M1224 1024v-8h5l1 2h6v6z" fill="#e0e0e0"/>
<path d="M1252.500 1024v-6.500h10v6.500M1256 1024v-2h3" fill="none" stroke="#d8d8d8"/>
<path d="M1278 1018h12M1282 1018v-2h4v2M1280 1018v6M1288 1018v6M1284 1019v5" fill="none" stroke="#858585"/>
<path d="M1317.500 61v963" stroke="#3a3a3a"/>

<!-- libraries -->
<rect x="1319" y="73" width="91" height="951" fill="#535353"/>
<path d="M1318.500 73v951" stroke="#3a3a3a"/>
<rect x="1319" y="113" width="91" height="1" fill="#3a3a3a"/>
<use href="#grip" x="1358" y="75"/>
<g fill="none" stroke="#b8b8b8" stroke-width="1.500"><path d="M1335 104h10q5 0 5-5.500t-5-5.500q-2-4-7-4-4.500.5-5.500 4-4 1-4 5.500t6.500 5.500z"/><path d="M1334 93q5-2 8 1t5 5M1331 100q3-5 8-3.500t4 5.500"/></g>
<text x="1357" y="101" font-size="10.500" font-weight="bold" fill="#e4e4e4" textLength="47" lengthAdjust="spacingAndGlyphs">Librarie...</text>
</svg>
</body></html>
